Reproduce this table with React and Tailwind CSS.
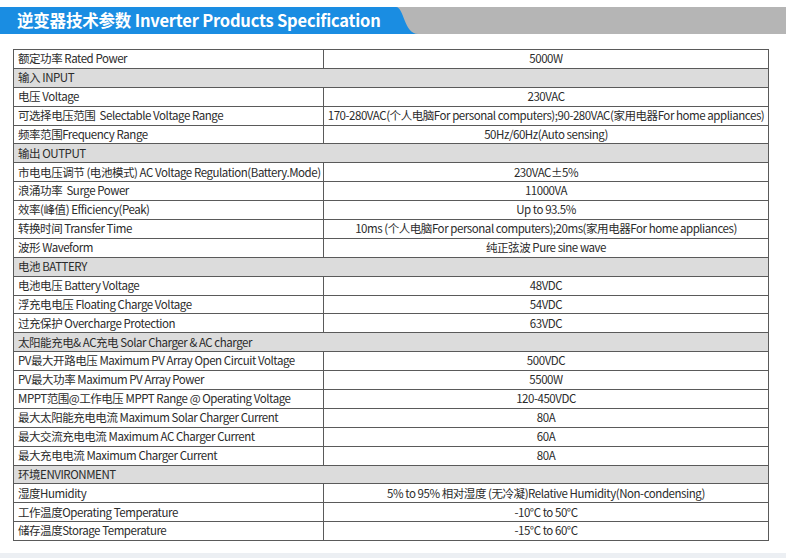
const FONT = { fontFamily: '"Noto Sans CJK SC", "Noto Sans", sans-serif' };

// [label, value] ; value === null -> section header row
const ROWS = [
  ["额定功率 Rated Power", "5000W"],
  ["输入 INPUT", null],
  ["电压 Voltage", "230VAC"],
  ["可选择电压范围  Selectable Voltage Range", "170-280VAC(个人电脑For personal computers);90-280VAC(家用电器For home appliances)"],
  ["频率范围Frequency Range", "50Hz/60Hz(Auto sensing)"],
  ["输出 OUTPUT", null],
  ["市电电压调节 (电池模式) AC Voltage Regulation(Battery.Mode)", "230VAC±5%"],
  ["浪涌功率  Surge Power", "11000VA"],
  ["效率(峰值) Efficiency(Peak)", "Up to 93.5%"],
  ["转换时间 Transfer Time", "10ms (个人电脑For personal computers);20ms(家用电器For home appliances)"],
  ["波形 Waveform", "纯正弦波 Pure sine wave"],
  ["电池 BATTERY", null],
  ["电池电压 Battery Voltage", "48VDC"],
  ["浮充电电压 Floating Charge Voltage", "54VDC"],
  ["过充保护 Overcharge Protection", "63VDC"],
  ["太阳能充电& AC充电 Solar Charger & AC charger", null],
  ["PV最大开路电压 Maximum PV Array Open Circuit Voltage", "500VDC"],
  ["PV最大功率 Maximum PV Array Power", "5500W"],
  ["MPPT范围@工作电压 MPPT Range @ Operating Voltage", "120-450VDC"],
  ["最大太阳能充电电流 Maximum Solar Charger Current", "80A"],
  ["最大交流充电电流 Maximum AC Charger Current", "60A"],
  ["最大充电电流 Maximum Charger Current", "80A"],
  ["环境ENVIRONMENT", null],
  ["湿度Humidity", "5% to 95% 相对湿度 (无冷凝)Relative Humidity(Non-condensing)"],
  ["工作温度Operating Temperature", "-10°C to 50°C"],
  ["储存温度Storage Temperature", "-15°C to 60°C"],
];

function Header() {
  return (
    <div className="relative mt-[7px] h-[27px] w-full bg-[#b5b5b5]">
      <div className="absolute left-0 top-0 flex h-full w-[420px]">
        <div className="flex h-full w-[392px] items-center bg-[#1a8de2] pl-[17px]">
          <span className="whitespace-nowrap text-[16.5px] font-bold leading-none tracking-[-0.2px] text-white">
            逆变器技术参数 Inverter Products Specification
          </span>
        </div>
        <svg width="28" height="27" viewBox="0 0 28 27" className="block">
          <path d="M0 0 H4 C12 0 12 27 26 27 H0 Z" fill="#1a8de2" />
        </svg>
      </div>
    </div>
  );
}

function Row({ label, value }) {
  if (value === null) {
    return (
      <div className="flex h-[18.9px] items-center border-b border-[#5a5a5a] bg-[#dcdcdc] pl-[4px] whitespace-pre">
        {label}
      </div>
    );
  }
  return (
    <div className="flex h-[18.9px] border-b border-[#5a5a5a] whitespace-pre">
      <div className="flex w-[310px] shrink-0 items-center border-r border-[#5a5a5a] pl-[4px]">{label}</div>
      <div className="flex flex-1 items-center justify-center">{value}</div>
    </div>
  );
}

export default function App() {
  return (
    <div className="relative h-[558px] w-[786px] overflow-hidden bg-white text-[#2b2b2b]" style={FONT}>
      <Header />
      <div className="ml-[13px] mt-[15px] w-[756px] border-l border-r border-t border-[#5a5a5a] text-[11.5px] leading-none tracking-[-0.45px]">
        {ROWS.map(([label, value], i) => (
          <Row key={i} label={label} value={value} />
        ))}
      </div>
      <div className="absolute bottom-0 left-0 h-[5px] w-full bg-[#eceff3]" />
    </div>
  );
}
